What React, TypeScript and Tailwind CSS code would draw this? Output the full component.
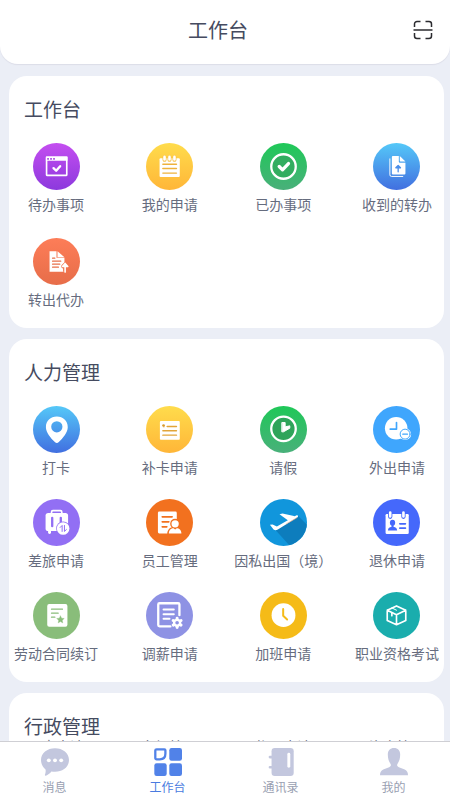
import type { ReactNode } from "react";

type Entry = { label: string; icon: ReactNode };

/* Round badge: a gradient disc with white artwork on a 142-unit canvas. */
function Badge({ id, from, to, children }: { id: string; from: string; to: string; children: ReactNode }) {
  return (
    <svg viewBox="0 0 142 142" className="size-[47px] shrink-0" aria-hidden="true">
      <defs>
        <linearGradient id={id} x1="0" y1="0" x2="0" y2="1">
          <stop offset="0" stopColor={from} />
          <stop offset="1" stopColor={to} />
        </linearGradient>
        <clipPath id={id + "-clip"}>
          <circle cx="71" cy="71" r="71" />
        </clipPath>
      </defs>
      <circle cx="71" cy="71" r="71" fill={`url(#${id})`} />
      <g clipPath={`url(#${id}-clip)`} strokeLinecap="round" strokeLinejoin="round" fill="none">
        {children}
      </g>
    </svg>
  );
}

const todo = (
  <Badge id="todo" from="#c44ef0" to="#8c39dd">
    <rect x="41" y="43" width="61" height="55" rx="1" stroke="#fff" strokeWidth="5" />
    <path d="M39 41h65v13H39z" fill="#fff" />
    <path d="M43 48h5M52 48h5M61 48h5" stroke="#a846e4" strokeWidth="5" strokeLinecap="butt" />
    <path d="M62 76l8 8 12-14" stroke="#fff" strokeWidth="7" />
  </Badge>
);

const myRequests = (
  <Badge id="mine" from="#ffdc4c" to="#ffb638">
    <path d="M44 46h55a3 3 0 0 1 3 3v51a3 3 0 0 1-3 3H44a3 3 0 0 1-3-3V49a3 3 0 0 1 3-3z" fill="#fff" />
    <path d="M56 43v8M71 43v8M86 43v8" stroke="#f6bf45" strokeWidth="12" />
    <path d="M56 42v8M71 42v8M86 42v8" stroke="#fff" strokeWidth="8" />
    <path d="M51 64h41M51 77h41M51 91h41" stroke="#eeb23c" strokeWidth="4.5" />
  </Badge>
);

const done = (
  <Badge id="done" from="#1fc858" to="#49b07a">
    <circle cx="71" cy="71" r="37" fill="#32ad60" stroke="#fff" strokeWidth="7" />
    <path d="M58 71l10 10 18-19" stroke="#fff" strokeWidth="10" />
  </Badge>
);

const received = (
  <Badge id="received" from="#55c8f8" to="#416fe0">
    <path d="M51 48v48a5 5 0 0 0 5 5h34" stroke="#fff" strokeWidth="3" />
    <path d="M60 39h18v18a3 3 0 0 0 3 3h17v32a3 3 0 0 1-3 3H60a3 3 0 0 1-3-3V42a3 3 0 0 1 3-3z" fill="#fff" />
    <path d="M81 39l17 17H83a2 2 0 0 1-2-2z" fill="#fff" />
    <path d="M76 87V74M69 75l7-7 7 7z" stroke="#4a8ee9" strokeWidth="4" fill="#4a8ee9" />
  </Badge>
);

const forwarded = (
  <Badge id="forwarded" from="#fd7d58" to="#e76d49">
    <path d="M50 40h21v20h24v42H50z" fill="#fff" />
    <path d="M74 40l21 18H74z" fill="#fff" />
    <path d="M59 61h7M59 70h25M59 79h22M59 88h18" stroke="#e8704b" strokeWidth="3.5" />
    <path d="M97 100V84M91 86l6-6 6 6" stroke="#f0754f" strokeWidth="12" />
    <path d="M97 103V82M89 86l8-9 8 9z" stroke="#fff" strokeWidth="5" fill="#fff" />
  </Badge>
);

const checkIn = (
  <Badge id="checkin" from="#55c8f8" to="#416fe0">
    <path
      d="M72 32c-19 0-33 13-33 32 0 16 15 33 27 45 4 4 8 4 12 0 12-12 27-29 27-45 0-19-14-32-33-32zm0 14a17 17 0 1 1 0 34 17 17 0 0 1 0-34z"
      fill="#fff"
      fillRule="evenodd"
    />
  </Badge>
);

const cardFix = (
  <Badge id="cardfix" from="#ffdc4c" to="#ffb638">
    <rect x="42" y="45" width="60" height="57" rx="3" fill="#fff" />
    <circle cx="53" cy="59" r="4" fill="#d99a2e" />
    <path d="M54 59v5" stroke="#d99a2e" strokeWidth="2" />
    <path d="M64 62h28M51 75h41M51 88h41" stroke="#e2a53a" strokeWidth="4.5" />
  </Badge>
);

const leave = (
  <Badge id="leave" from="#1fc858" to="#49b07a">
    <circle cx="71" cy="69" r="37" fill="#2ea45a" stroke="#fff" strokeWidth="7" />
    <path d="M67 50h9v13l14-3v7l-19 11h-4z" fill="#fff" stroke="#fff" strokeWidth="3" />
  </Badge>
);

const outing = (
  <Badge id="outing" from="#3fa6fd" to="#3fa6fd">
    <circle cx="70" cy="67" r="34" fill="#fff" />
    <path d="M71 50v20H52" stroke="#3fa6fd" strokeWidth="5" />
    <circle cx="97" cy="85" r="18" fill="#fff" />
    <circle cx="97" cy="85" r="15" stroke="#3fa6fd" strokeWidth="3" />
    <path d="M90 85h14" stroke="#3fa6fd" strokeWidth="4" />
  </Badge>
);

const travel = (
  <Badge id="travel" from="#926ff4" to="#926ff4">
    <path d="M56 44v-5a4 4 0 0 1 4-4h23a4 4 0 0 1 4 4v5" stroke="#fff" strokeWidth="5" />
    <rect x="38" y="42" width="68" height="55" rx="8" fill="#fff" />
    <path d="M50 98v3M94 98v3" stroke="#fff" strokeWidth="9" />
    <path d="M58 57v25M84 57v20" stroke="#926ff4" strokeWidth="7" />
    <circle cx="91" cy="89" r="21" fill="#926ff4" />
    <circle cx="91" cy="89" r="19" fill="#fff" />
    <path d="M88 98V80l-6 6M95 80v18l6-6" stroke="#926ff4" strokeWidth="3" />
  </Badge>
);

const staff = (
  <Badge id="staff" from="#f2711f" to="#f2711f">
    <rect x="36" y="38" width="57" height="66" rx="4" fill="#fff" />
    <path d="M49 54h30M49 69h20M49 84h14" stroke="#f2711f" strokeWidth="5" />
    <circle cx="88" cy="75" r="15" fill="#f2711f" />
    <path d="M64 107c0-16 10-23 24-23s24 7 24 23z" fill="#f2711f" />
    <circle cx="88" cy="75" r="11" fill="#fff" />
    <path d="M69 104c0-11 7-16 14-16l5 4 5-4c7 0 14 5 14 16z" fill="#fff" />
  </Badge>
);

const abroad = (
  <Badge id="abroad" from="#1196dc" to="#1196dc">
    <path d="M114 50l40 40v60H98L44 91z" fill="#0d7dbd" />
    <path d="M30 78l8-1 13 6 58-33c3-2 6-1 6 1s-1 4-4 6L54 92c-5 3-9 3-13 0z" fill="#fff" />
    <path d="M59 46l9-2 38 8-18 15z" fill="#fff" />
    <path d="M80 75l31-18" stroke="#e8a882" strokeWidth="2" />
  </Badge>
);

const retire = (
  <Badge id="retire" from="#4568fb" to="#4568fb">
    <rect x="38" y="45" width="70" height="61" rx="4" fill="#fff" />
    <path d="M52 41v13M92 41v13" stroke="#4568fb" strokeWidth="13" />
    <path d="M52 41v12M92 41v12" stroke="#fff" strokeWidth="8" />
    <ellipse cx="59" cy="72" rx="8" ry="9" fill="#4568fb" />
    <path d="M56 78h6v6c6 2 10 3 11 11H45c1-8 5-9 11-11z" fill="#4568fb" />
    <path d="M81 75h17M81 88h17" stroke="#4568fb" strokeWidth="5" />
  </Badge>
);

const contract = (
  <Badge id="contract" from="#89bd7a" to="#89bd7a">
    <rect x="43" y="36" width="61" height="69" rx="6" fill="#fff" />
    <path d="M56 52h33M56 64h20M56 76h10" stroke="#89bd7a" strokeWidth="4" />
    <path d="M83 72l3.500 7 8 1-6 5.500 1.500 8-7-4-7 4 1.500-8-6-5.500 8-1z" fill="#89bd7a" stroke="#89bd7a" strokeWidth="1" />
  </Badge>
);

const salary = (
  <Badge id="salary" from="#8e92e4" to="#8e92e4">
    <path d="M74 104H41a4 4 0 0 1-4-4V38a4 4 0 0 1 4-4h56a4 4 0 0 1 4 4v32" stroke="#fff" strokeWidth="7" />
    <path d="M53 53h31M53 67h31M53 81h18" stroke="#fff" strokeWidth="6" />
    <circle cx="94" cy="93" r="10" stroke="#8e92e4" strokeWidth="20" />
    <path d="M94 79v28M82 86l24 14M82 100l24-14" stroke="#fff" strokeWidth="9" />
    <circle cx="94" cy="93" r="9" stroke="#fff" strokeWidth="7" fill="#8e92e4" />
  </Badge>
);

const overtime = (
  <Badge id="overtime" from="#f5bb18" to="#f5bb18">
    <circle cx="71" cy="70" r="36" fill="#fff" />
    <path d="M70 51v21l12 11" stroke="#f5bb18" strokeWidth="6" />
  </Badge>
);

const exam = (
  <Badge id="exam" from="#1aadad" to="#1aadad">
    <path d="M71 42l28 13v31L71 99 43 86V55zM43 55l28 14 28-14M71 69v30" stroke="#fff" strokeWidth="5" />
    <path d="M57 63v9" stroke="#fff" strokeWidth="5" />
    <path d="M57 48l14 7" stroke="#fff" strokeWidth="3" />
  </Badge>
);

const workbench: Entry[] = [
  { label: "待办事项", icon: todo },
  { label: "我的申请", icon: myRequests },
  { label: "已办事项", icon: done },
  { label: "收到的转办", icon: received },
  { label: "转出代办", icon: forwarded },
];

const people: Entry[] = [
  { label: "打卡", icon: checkIn },
  { label: "补卡申请", icon: cardFix },
  { label: "请假", icon: leave },
  { label: "外出申请", icon: outing },
  { label: "差旅申请", icon: travel },
  { label: "员工管理", icon: staff },
  { label: "因私出国（境）", icon: abroad },
  { label: "退休申请", icon: retire },
  { label: "劳动合同续订", icon: contract },
  { label: "调薪申请", icon: salary },
  { label: "加班申请", icon: overtime },
  { label: "职业资格考试", icon: exam },
];

const admin = ["公章申请", "车辆管理", "物品申请", "资产管理"];

function Card({ title, children }: { title: string; children: ReactNode }) {
  return (
    <section className="shrink-0 rounded-[18px] bg-white pt-[21px] pb-[19px]">
      <h2 className="pl-[15px] text-[19px] leading-6 text-[#454b60]">{title}</h2>
      {children}
    </section>
  );
}

function EntryGrid({ entries, rowGap }: { entries: Entry[]; rowGap: string }) {
  return (
    <div className={`mt-[22px] grid grid-cols-[repeat(4,94px)] justify-between ${rowGap}`}>
      {entries.map((entry) => (
        <button key={entry.label} type="button" className="flex flex-col items-center gap-1">
          {entry.icon}
          <span className="text-sm leading-5 whitespace-nowrap text-[#666c7e]">{entry.label}</span>
        </button>
      ))}
    </div>
  );
}

const tabs = [
  {
    label: "消息",
    active: false,
    icon: (
      <>
        <path d="M43 1c24 0 43 15 43 36S67 73 43 73c-4 0-8 0-11-1-5 6-11 11-17 13-2 1-4-1-3-3 2-5 3-10 2-16C6 59 0 49 0 37 0 16 19 1 43 1z" fill="currentColor" />
        <circle cx="24" cy="38" r="6" fill="#fff" />
        <circle cx="43" cy="38" r="6" fill="#fff" />
        <circle cx="62" cy="38" r="6" fill="#fff" />
      </>
    ),
  },
  {
    label: "工作台",
    active: true,
    icon: (
      <>
        <path d="M8 4h24a3 3 0 0 1 3 3v11c0 11-6 17-17 17H8a4 4 0 0 1-4-4V8a4 4 0 0 1 4-4z" fill="none" stroke="currentColor" strokeWidth="7" />
        <rect x="47" y="0" width="39" height="39" rx="7" fill="currentColor" />
        <rect x="1" y="47" width="38" height="39" rx="7" fill="currentColor" />
        <rect x="47" y="47" width="39" height="39" rx="7" fill="currentColor" />
      </>
    ),
  },
  {
    label: "通讯录",
    active: false,
    icon: (
      <>
        <rect x="14" y="0" width="68" height="86" rx="10" fill="currentColor" />
        <path d="M9 28h10M9 59h10" stroke="currentColor" strokeWidth="8" strokeLinecap="round" />
        <path d="M67 19v37" stroke="#fff" strokeWidth="9" strokeLinecap="round" />
      </>
    ),
  },
  {
    label: "我的",
    active: false,
    icon: (
      <path
        d="M43 0c12 0 19 8 19 20 0 12-3 21-8 28-3 5-1 9 4 11l18 7c7 3 10 9 10 18H0c0-9 3-15 10-18l18-7c5-2 7-6 4-11-5-7-8-16-8-28C24 8 31 0 43 0z"
        fill="currentColor"
      />
    ),
  },
];

export default function App() {
  return (
    <div className="flex h-screen flex-col overflow-hidden bg-[#ebeef6] font-['Noto_Sans_CJK_SC',sans-serif]">
      <header className="flex h-16 shrink-0 items-center rounded-b-[18px] bg-white pr-[17px] pb-1 pl-[23px] shadow-[0_1px_1px_#dcdde8]">
        <h1 className="flex-1 text-center text-xl leading-7 text-[#454b60]">工作台</h1>
        <button type="button" aria-label="扫一扫" className="text-[#2b2b2f]">
          <svg viewBox="0 0 20 20" className="block size-5" fill="none" stroke="currentColor" strokeWidth="1.5">
            <path d="M1.500 7V4a2.500 2.500 0 0 1 2.500-2.500h3.500M12.500 1.500H16A2.500 2.500 0 0 1 18.500 4v3M18.500 13v3a2.500 2.500 0 0 1-2.500 2.500h-3.500M7.500 18.500H4A2.500 2.500 0 0 1 1.500 16v-3M.5 10h19" />
          </svg>
        </button>
      </header>

      <main className="flex min-h-0 flex-1 flex-col gap-[11px] overflow-y-auto pt-3 pr-1.5 pl-[9px] [scrollbar-width:none]">
        <Card title="工作台">
          <EntryGrid entries={workbench} rowGap="gap-y-6" />
        </Card>
        <Card title="人力管理">
          <EntryGrid entries={people} rowGap="gap-y-[22px]" />
        </Card>
        <Card title="行政管理">
          <div className="grid grid-cols-[repeat(4,94px)] justify-between">
            {admin.map((label) => (
              <button key={label} type="button" className="text-sm leading-4 whitespace-nowrap text-[#666c7e]">
                {label}
              </button>
            ))}
          </div>
        </Card>
      </main>

      <nav className="shrink-0 border-t border-[#cfcfd4] bg-white pt-1.5 pb-[5px]">
        <div className="-ml-0.5 grid grid-cols-4">
          {tabs.map((tab) => (
            <a
              key={tab.label}
              href="#"
              aria-current={tab.active ? "page" : undefined}
              className="flex flex-col items-center gap-[3px]"
            >
              <svg
                viewBox="0 0 86 86"
                className={tab.active ? "size-7 text-[#5182e8]" : "size-7 text-[#c3c7de]"}
                aria-hidden="true"
              >
                {tab.icon}
              </svg>
              <span className={tab.active ? "text-xs leading-4 text-[#4a7be0]" : "text-xs leading-4 text-[#99a0b1]"}>
                {tab.label}
              </span>
            </a>
          ))}
        </div>
      </nav>
    </div>
  );
}
